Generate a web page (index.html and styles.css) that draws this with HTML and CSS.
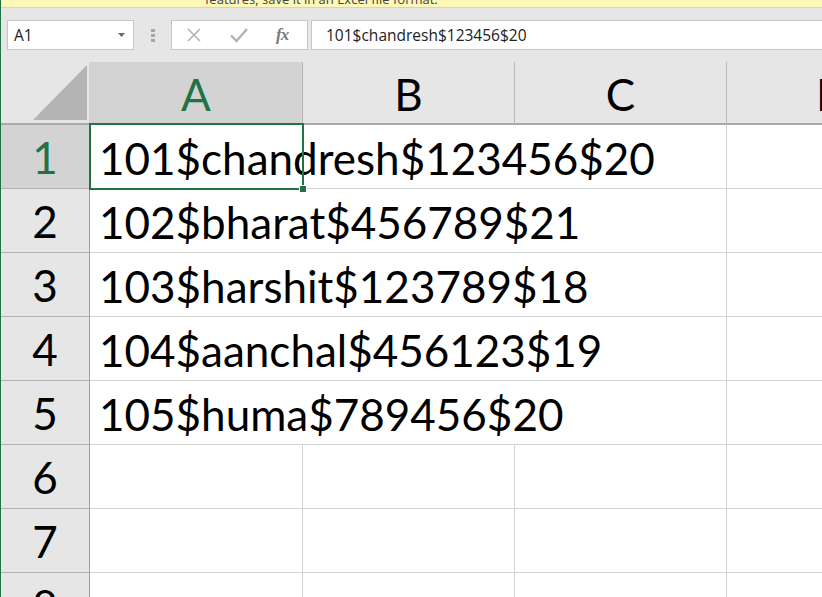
FILE: index.html
```html
<!DOCTYPE html>
<html lang="en">
<head>
<meta charset="utf-8">
<title>Excel sheet</title>
<link rel="stylesheet" href="styles.css">
</head>
<body>
<div class="app">
  <div class="banner"><span class="banner-text">features, save it in an Excel file format.</span></div>
  <div class="fbar">
    <div class="namebox">
      <span>A1</span>
      <svg class="caret" width="7" height="4" viewBox="0 0 7 4"><path d="M0 0h7L3.5 4z" fill="#6a6a6a"/></svg>
    </div>
    <svg class="grip" width="4" height="13" viewBox="0 0 4 13"><rect x="0" y="0" width="4" height="3" fill="#a6a6a6"/><rect x="0" y="5" width="4" height="3" fill="#a6a6a6"/><rect x="0" y="10" width="4" height="3" fill="#a6a6a6"/></svg>
    <div class="btns">
      <svg class="ico" width="16" height="16" viewBox="0 0 16 16"><path d="M2 2L14 14M14 2L2 14" stroke="#b3b3b3" stroke-width="1.6" fill="none"/></svg>
      <svg class="ico" width="18" height="16" viewBox="0 0 18 16"><path d="M1 8.5L6.5 14L17 2" stroke="#b3b3b3" stroke-width="2.4" fill="none"/></svg>
      <span class="fx">fx</span>
    </div>
    <div class="formula">101$chandresh$123456$20</div>
  </div>
  <div class="sheet">
    <div class="hd corner"><div class="tri"></div></div>
    <div class="hd col sel">A</div>
    <div class="hd col">B</div>
    <div class="hd col">C</div>
    <div class="hd col last">D</div>

    <div class="rh sel">1</div>
    <div class="cell wide">101$chandresh$123456$20</div>
    <div class="cell last"></div>

    <div class="rh">2</div>
    <div class="cell wide">102$bharat$456789$21</div>
    <div class="cell last"></div>

    <div class="rh">3</div>
    <div class="cell wide">103$harshit$123789$18</div>
    <div class="cell last"></div>

    <div class="rh">4</div>
    <div class="cell wide">104$aanchal$456123$19</div>
    <div class="cell last"></div>

    <div class="rh">5</div>
    <div class="cell wide">105$huma$789456$20</div>
    <div class="cell last"></div>

    <div class="rh">6</div>
    <div class="cell"></div><div class="cell"></div><div class="cell"></div><div class="cell last"></div>

    <div class="rh">7</div>
    <div class="cell"></div><div class="cell"></div><div class="cell"></div><div class="cell last"></div>

    <div class="rh">8</div>
    <div class="cell"></div><div class="cell"></div><div class="cell"></div><div class="cell last"></div>

    <div class="selection"><span class="handle"></span></div>
  </div>
</div>
</body>
</html>
```

FILE: styles.css
```css
* { box-sizing: border-box; }
html, body { margin: 0; padding: 0; background: #fff; overflow: hidden; }
body { width: 822px; height: 597px; }

.app {
  width: 822px;
  height: 597px;
  overflow: hidden;
  border-left: 1px solid #217346;
  font-family: "Open Sans", "Noto Sans", sans-serif;
}

.banner {
  height: 8px;
  background: #fdf7b8;
  border-bottom: 1px solid #e6d87e;
  overflow: hidden;
}
.banner-text {
  display: block;
  margin-top: -9px;
  padding-left: 204px;
  font-size: 13px;
  line-height: 16px;
  color: #444;
  white-space: nowrap;
}

.fbar {
  height: 54px;
  background: #e6e6e6;
  display: flex;
  align-items: flex-start;
  padding: 12px 0 0 6px;
}
.namebox {
  width: 127px;
  height: 30px;
  background: #fff;
  border: 1px solid #c6c6c6;
  display: flex;
  align-items: center;
  justify-content: space-between;
  padding: 0 8px 0 6px;
  font-size: 15.5px;
  color: #222;
}
.grip { margin: 9px 0 0 17px; }
.btns {
  margin-left: 16px;
  width: 137px;
  height: 30px;
  background: #fff;
  border: 1px solid #c6c6c6;
  display: flex;
  align-items: center;
  padding-left: 14px;
}
.btns .ico:nth-child(1) { margin-right: 28px; }
.btns .ico:nth-child(2) { margin-right: 28px; }
.fx {
  font-family: "Liberation Serif", "DejaVu Serif", serif;
  font-style: italic;
  font-weight: bold;
  font-size: 17px;
  color: #7a7a7a;
  letter-spacing: -1px;
}
.formula {
  margin-left: 3px;
  flex: 1;
  height: 30px;
  background: #fff;
  border: 1px solid #c6c6c6;
  border-right: none;
  display: flex;
  align-items: center;
  padding-left: 14px;
  font-size: 15.5px;
  color: #222;
  white-space: nowrap;
}

.sheet {
  position: relative;
  display: grid;
  grid-template-columns: 89px 213px 212px 212px 1fr;
  grid-template-rows: 63px repeat(8, 64px);
  font-family: "Lato", "Noto Sans", sans-serif;
  font-size: 44px;
  color: #000;
}

.hd {
  background: #e6e6e6;
  border-bottom: 2px solid #a9a9a9;
  border-right: 1px solid #b8b8b8;
  display: flex;
  align-items: center;
  justify-content: center;
  line-height: 1;
  padding-top: 2px;
}
.hd.corner {
  border-right: 1px solid #d0d0d0;
  align-items: flex-end;
  justify-content: flex-end;
  padding: 0 2px 3px 0;
}
.tri {
  width: 54px;
  height: 55px;
  background: #b4b4b4;
  clip-path: polygon(100% 0, 100% 100%, 0 100%);
}
.hd.sel { background: #d3d3d3; color: #217346; }
.hd.last { border-right: none; justify-content: flex-start; padding-left: 89px; }

.rh {
  background: #e6e6e6;
  border-right: 1px solid #9e9e9e;
  border-bottom: 1px solid #b0b0b0;
  display: flex;
  align-items: center;
  justify-content: center;
  line-height: 1;
}
.rh.sel { background: #d3d3d3; color: #217346; }

.cell {
  border-right: 1px solid #d4d4d4;
  border-bottom: 1px solid #d4d4d4;
  display: flex;
  align-items: center;
  line-height: 1;
  white-space: nowrap;
}
.cell.wide {
  grid-column: span 3;
  padding: 2px 0 0 9px;
}
.cell.last { border-right: none; }

.selection {
  position: absolute;
  left: 88px;
  top: 61px;
  width: 215px;
  height: 67px;
  border: 2px solid #217346;
  pointer-events: none;
}
.handle {
  position: absolute;
  right: -5px;
  bottom: -5px;
  width: 8px;
  height: 8px;
  background: #217346;
  border: 1px solid #fff;
}
```
